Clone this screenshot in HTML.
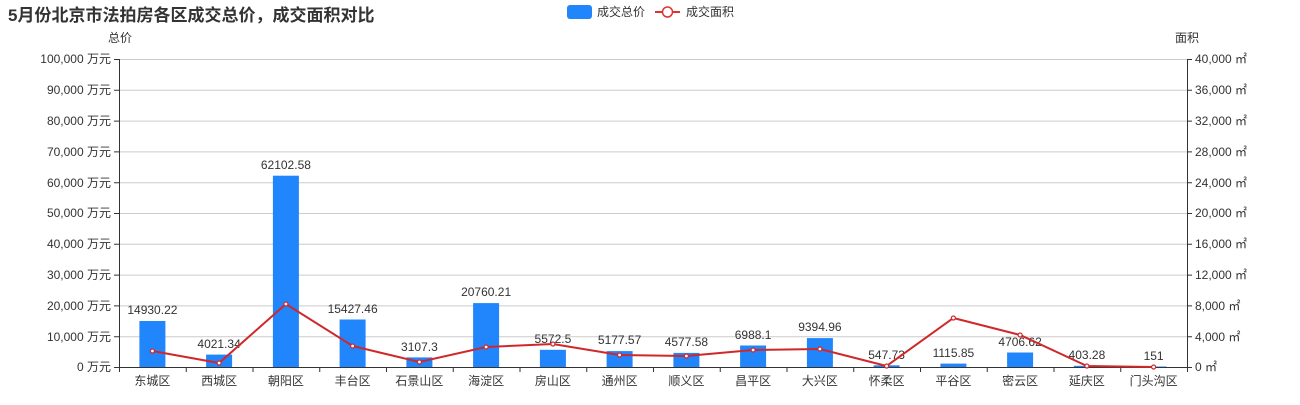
<!DOCTYPE html>
<html><head><meta charset="utf-8"><style>
body{margin:0;background:#fff;width:1300px;height:400px;overflow:hidden}
text{font-family:"Liberation Sans","Noto Sans CJK SC",sans-serif}
</style></head><body>
<svg width="1300" height="400" xmlns="http://www.w3.org/2000/svg">
<text x="8" y="21" font-size="17" font-weight="bold" fill="#333">5月份北京市法拍房各区成交总价，成交面积对比</text>
<rect x="567" y="5" width="25" height="14" rx="3" fill="#2185fb"/>
<text x="597" y="16" font-size="12" fill="#333">成交总价</text>
<line x1="655" y1="12" x2="680" y2="12" stroke="#d33" stroke-width="2"/>
<circle cx="667.5" cy="12" r="5" fill="#fff" stroke="#d33" stroke-width="1.5"/>
<text x="686" y="16" font-size="12" fill="#333">成交面积</text>
<text x="108" y="42" font-size="12" fill="#333">总价</text>
<text x="1175" y="42" font-size="12" fill="#333">面积</text>
<g stroke="#ccc" stroke-width="1">
<line x1="119" x2="1187" y1="59.5" y2="59.5"/><line x1="119" x2="1187" y1="90.3" y2="90.3"/><line x1="119" x2="1187" y1="121.1" y2="121.1"/><line x1="119" x2="1187" y1="151.9" y2="151.9"/><line x1="119" x2="1187" y1="182.7" y2="182.7"/><line x1="119" x2="1187" y1="213.5" y2="213.5"/><line x1="119" x2="1187" y1="244.3" y2="244.3"/><line x1="119" x2="1187" y1="275.1" y2="275.1"/><line x1="119" x2="1187" y1="305.9" y2="305.9"/><line x1="119" x2="1187" y1="336.7" y2="336.7"/>
</g>
<g stroke="#333" stroke-width="1">
<line x1="119.5" y1="59" x2="119.5" y2="367"/><line x1="1187.5" y1="59" x2="1187.5" y2="367"/><line x1="119" y1="367.5" x2="1187" y2="367.5"/>
</g>
<g font-size="12" fill="#333" text-anchor="end">
<text x="111" y="63">100,000 万元</text><text x="111" y="94">90,000 万元</text><text x="111" y="125">80,000 万元</text><text x="111" y="156">70,000 万元</text><text x="111" y="187">60,000 万元</text><text x="111" y="217">50,000 万元</text><text x="111" y="248">40,000 万元</text><text x="111" y="279">30,000 万元</text><text x="111" y="310">20,000 万元</text><text x="111" y="341">10,000 万元</text><text x="111" y="371">0 万元</text>
</g>
<g font-size="12" fill="#333">
<text x="1195" y="63">40,000 ㎡</text><text x="1195" y="94">36,000 ㎡</text><text x="1195" y="125">32,000 ㎡</text><text x="1195" y="156">28,000 ㎡</text><text x="1195" y="187">24,000 ㎡</text><text x="1195" y="217">20,000 ㎡</text><text x="1195" y="248">16,000 ㎡</text><text x="1195" y="279">12,000 ㎡</text><text x="1195" y="310">8,000 ㎡</text><text x="1195" y="341">4,000 ㎡</text><text x="1195" y="371">0 ㎡</text>
</g>
<g stroke="#333"><path d="M114 59.5h5M114 90.3h5M114 121.1h5M114 151.9h5M114 182.7h5M114 213.5h5M114 244.3h5M114 275.1h5M114 305.9h5M114 336.7h5M114 367.5h5M1187 59.5h5M1187 90.3h5M1187 121.1h5M1187 151.9h5M1187 182.7h5M1187 213.5h5M1187 244.3h5M1187 275.1h5M1187 305.9h5M1187 336.7h5M1187 367.5h5"/>
<path d="M119.5 367v5M186.25 367v5M253 367v5M319.75 367v5M386.5 367v5M453.25 367v5M520 367v5M586.75 367v5M653.5 367v5M720.25 367v5M787 367v5M853.75 367v5M920.5 367v5M987.25 367v5M1054 367v5M1120.75 367v5M1187.5 367v5"/></g>
<g fill="#2185fb">
<rect x="139.4" y="321" width="26" height="46"/><rect x="206.1" y="354.6" width="26" height="12.4"/><rect x="272.9" y="175.7" width="26" height="191.3"/><rect x="339.6" y="319.5" width="26" height="47.5"/><rect x="406.4" y="357.4" width="26" height="9.6"/><rect x="473.1" y="303.1" width="26" height="63.9"/><rect x="539.9" y="349.8" width="26" height="17.2"/><rect x="606.6" y="351.1" width="26" height="15.9"/><rect x="673.4" y="352.9" width="26" height="14.1"/><rect x="740.1" y="345.5" width="26" height="21.5"/><rect x="806.9" y="338.1" width="26" height="28.9"/><rect x="873.6" y="365.3" width="26" height="1.7"/><rect x="940.4" y="363.6" width="26" height="3.4"/><rect x="1007.1" y="352.5" width="26" height="14.5"/><rect x="1073.9" y="365.8" width="26" height="1.2"/><rect x="1140.6" y="366.5" width="26" height=".5"/>
</g>
<g font-size="12" fill="#333" text-anchor="middle">
<text x="152.4" y="314">14930.22</text><text x="219.1" y="348">4021.34</text><text x="285.9" y="169">62102.58</text><text x="352.6" y="313">15427.46</text><text x="419.4" y="351">3107.3</text><text x="486.1" y="296">20760.21</text><text x="552.9" y="343">5572.5</text><text x="619.6" y="344">5177.57</text><text x="686.4" y="346">4577.58</text><text x="753.1" y="339">6988.1</text><text x="819.9" y="331">9394.96</text><text x="886.6" y="359">547.73</text><text x="953.4" y="357">1115.85</text><text x="1020.1" y="346">4706.62</text><text x="1086.9" y="359">403.28</text><text x="1153.6" y="360">151</text>
</g>
<polyline fill="none" stroke="#d0282a" stroke-width="2" points="152.4,351 219.1,363 285.9,304 352.6,346 419.4,362 486.1,347 552.9,344 619.6,355 686.4,356 753.1,350 819.9,349 886.6,366 953.4,318 1020.1,335 1086.9,366 1153.6,367"/>
<g fill="#fff" stroke="#d0282a" stroke-width="1.2">
<circle cx="152.4" cy="351" r="2"/><circle cx="219.1" cy="363" r="2"/><circle cx="285.9" cy="304" r="2"/><circle cx="352.6" cy="346" r="2"/><circle cx="419.4" cy="362" r="2"/><circle cx="486.1" cy="347" r="2"/><circle cx="552.9" cy="344" r="2"/><circle cx="619.6" cy="355" r="2"/><circle cx="686.4" cy="356" r="2"/><circle cx="753.1" cy="350" r="2"/><circle cx="819.9" cy="349" r="2"/><circle cx="886.6" cy="366" r="2"/><circle cx="953.4" cy="318" r="2"/><circle cx="1020.1" cy="335" r="2"/><circle cx="1086.9" cy="366" r="2"/><circle cx="1153.6" cy="367" r="2"/>
</g>
<g font-size="12" fill="#333" text-anchor="middle">
<text x="152.4" y="385">东城区</text><text x="219.1" y="385">西城区</text><text x="285.9" y="385">朝阳区</text><text x="352.6" y="385">丰台区</text><text x="419.4" y="385">石景山区</text><text x="486.1" y="385">海淀区</text><text x="552.9" y="385">房山区</text><text x="619.6" y="385">通州区</text><text x="686.4" y="385">顺义区</text><text x="753.1" y="385">昌平区</text><text x="819.9" y="385">大兴区</text><text x="886.6" y="385">怀柔区</text><text x="953.4" y="385">平谷区</text><text x="1020.1" y="385">密云区</text><text x="1086.9" y="385">延庆区</text><text x="1153.6" y="385">门头沟区</text>
</g>
</svg>
</body></html>
